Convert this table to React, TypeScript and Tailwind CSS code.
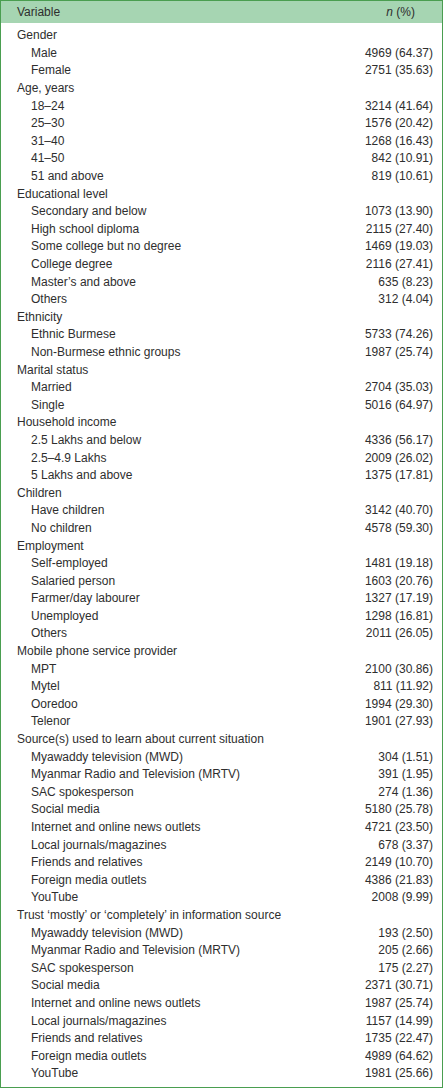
import React from 'react';

type Group = { title: string; rows: [string, string][] };

const groups: Group[] = [
  { title: 'Gender', rows: [['Male', '4969 (64.37)'], ['Female', '2751 (35.63)']] },
  {
    title: 'Age, years',
    rows: [
      ['18–24', '3214 (41.64)'],
      ['25–30', '1576 (20.42)'],
      ['31–40', '1268 (16.43)'],
      ['41–50', '842 (10.91)'],
      ['51 and above', '819 (10.61)'],
    ],
  },
  {
    title: 'Educational level',
    rows: [
      ['Secondary and below', '1073 (13.90)'],
      ['High school diploma', '2115 (27.40)'],
      ['Some college but no degree', '1469 (19.03)'],
      ['College degree', '2116 (27.41)'],
      ['Master’s and above', '635 (8.23)'],
      ['Others', '312 (4.04)'],
    ],
  },
  {
    title: 'Ethnicity',
    rows: [
      ['Ethnic Burmese', '5733 (74.26)'],
      ['Non-Burmese ethnic groups', '1987 (25.74)'],
    ],
  },
  { title: 'Marital status', rows: [['Married', '2704 (35.03)'], ['Single', '5016 (64.97)']] },
  {
    title: 'Household income',
    rows: [
      ['2.5 Lakhs and below', '4336 (56.17)'],
      ['2.5–4.9 Lakhs', '2009 (26.02)'],
      ['5 Lakhs and above', '1375 (17.81)'],
    ],
  },
  { title: 'Children', rows: [['Have children', '3142 (40.70)'], ['No children', '4578 (59.30)']] },
  {
    title: 'Employment',
    rows: [
      ['Self-employed', '1481 (19.18)'],
      ['Salaried person', '1603 (20.76)'],
      ['Farmer/day labourer', '1327 (17.19)'],
      ['Unemployed', '1298 (16.81)'],
      ['Others', '2011 (26.05)'],
    ],
  },
  {
    title: 'Mobile phone service provider',
    rows: [
      ['MPT', '2100 (30.86)'],
      ['Mytel', '811 (11.92)'],
      ['Ooredoo', '1994 (29.30)'],
      ['Telenor', '1901 (27.93)'],
    ],
  },
  {
    title: 'Source(s) used to learn about current situation',
    rows: [
      ['Myawaddy television (MWD)', '304 (1.51)'],
      ['Myanmar Radio and Television (MRTV)', '391 (1.95)'],
      ['SAC spokesperson', '274 (1.36)'],
      ['Social media', '5180 (25.78)'],
      ['Internet and online news outlets', '4721 (23.50)'],
      ['Local journals/magazines', '678 (3.37)'],
      ['Friends and relatives', '2149 (10.70)'],
      ['Foreign media outlets', '4386 (21.83)'],
      ['YouTube', '2008 (9.99)'],
    ],
  },
  {
    title: 'Trust ‘mostly’ or ‘completely’ in information source',
    rows: [
      ['Myawaddy television (MWD)', '193 (2.50)'],
      ['Myanmar Radio and Television (MRTV)', '205 (2.66)'],
      ['SAC spokesperson', '175 (2.27)'],
      ['Social media', '2371 (30.71)'],
      ['Internet and online news outlets', '1987 (25.74)'],
      ['Local journals/magazines', '1157 (14.99)'],
      ['Friends and relatives', '1735 (22.47)'],
      ['Foreign media outlets', '4989 (64.62)'],
      ['YouTube', '1981 (25.66)'],
    ],
  },
];

function Row({ label, value, indent }: { label: string; value?: string; indent?: boolean }) {
  return (
    <div className="flex h-[17.6px] items-center justify-between">
      <span className={indent ? 'pl-[30px]' : 'pl-[16px]'}>{label}</span>
      {value && <span className="pr-[9px]">{value}</span>}
    </div>
  );
}

export default function App() {
  return (
    <div
      className="w-[443px] border border-[#4a9e50] bg-white text-[12px] text-[#2e2e2e]"
      style={{ fontFamily: '"Liberation Sans", Arial, sans-serif' }}
    >
      <div className="flex h-[21.5px] items-center justify-between bg-[#a6d5b2]">
        <span className="pl-[16px]">Variable</span>
        <span className="pr-[27px]">
          <i>n</i> (%)
        </span>
      </div>
      <div className="pt-[4px] pb-[5px]">
        {groups.map((g) => (
          <React.Fragment key={g.title}>
            <Row label={g.title} />
            {g.rows.map(([l, v]) => (
              <Row key={g.title + l} label={l} value={v} indent />
            ))}
          </React.Fragment>
        ))}
      </div>
    </div>
  );
}
